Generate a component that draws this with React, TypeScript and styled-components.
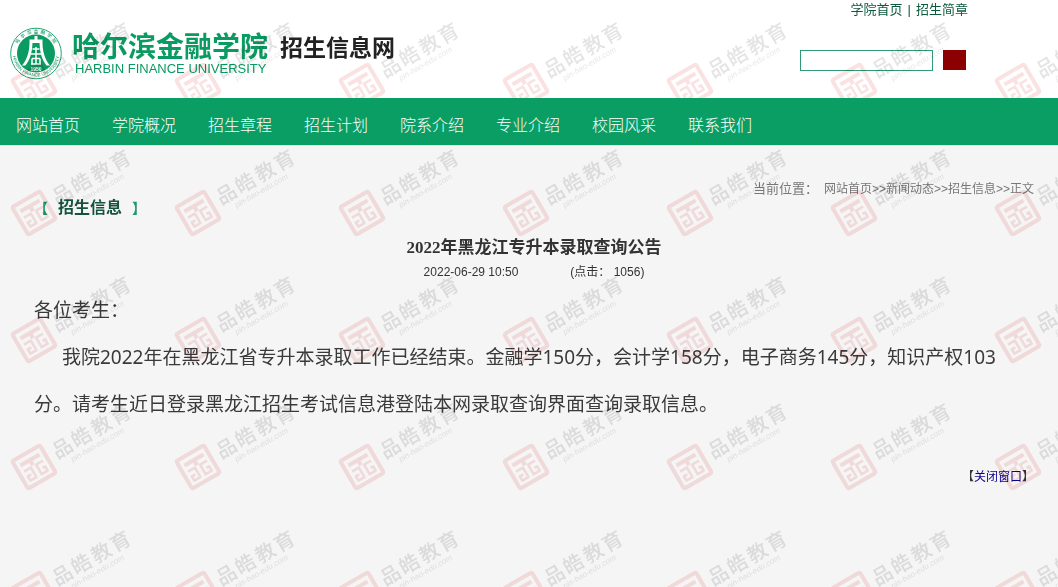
import React from "react";
import styled, { createGlobalStyle } from "styled-components";

const sans = `"Liberation Sans", "Noto Sans CJK SC", sans-serif`;

const GlobalStyle = createGlobalStyle`
  * { box-sizing: border-box; }
  body { margin: 0; background: #f5f5f5; color: #333; font: 12px/16px ${sans}; }
  a { color: inherit; text-decoration: none; }
`;

const Page = styled.div`
  position: relative;
  min-height: 100vh;
  overflow: hidden;
`;

const Header = styled.header`
  display: flex;
  justify-content: space-between;
  height: 98px;
  padding: 0 90px 0 10px;
  background: #fff;
`;

const Brand = styled.a`
  display: flex;
  align-items: flex-start;
  padding-top: 27px;
`;

const School = styled.span`
  display: flex;
  flex-direction: column;
  margin-left: 10px;
  padding-top: 6px;
  color: #0a9b62;
`;

const SchoolName = styled.span`
  font-size: 28px;
  line-height: 30px;
  font-weight: 700;
`;

const SchoolEnglish = styled.span`
  padding-left: 3px;
  font-size: 13px;
  line-height: 12px;
`;

const SiteName = styled.span`
  margin-left: 12px;
  color: #222;
  font-size: 23px;
  line-height: 42px;
  font-weight: 700;
`;

const Tools = styled.div`
  display: flex;
  flex-direction: column;
  gap: 32px;
  width: 168px;
  padding-top: 2px;
`;

const TopLinks = styled.div`
  display: flex;
  justify-content: flex-end;
  gap: 5px;
  color: #0b5a3c;
  font-size: 13px;
  line-height: 16px;
`;

const Search = styled.form`
  display: flex;
  gap: 10px;
`;

const SearchInput = styled.input`
  width: 133px;
  height: 21px;
  padding: 0 4px;
  border: 1px solid #2f9a73;
  background: #fff;
  font: inherit;
`;

const SearchButton = styled.button`
  width: 23px;
  height: 20px;
  padding: 0;
  border: 0;
  background: #8b0000;
  position: relative;
  z-index: 2;
`;

const Nav = styled.nav`
  position: relative;
  z-index: 2;
  display: flex;
  height: 48px;
  background: #0a9e64;
  border-bottom: 1px solid #c4fbe6;
`;

const NavLink = styled.a`
  padding: 0 16px;
  color: #fff;
  font-size: 16px;
  line-height: 56px;
  font-weight: 300;
`;

const Main = styled.main`
  padding: 33px 24px 24px 34px;
`;

const Crumbs = styled.nav`
  display: flex;
  justify-content: flex-end;
  gap: 6px;
  color: #777;
  line-height: 20px;
`;

const CrumbLabel = styled.span`
  font-size: 13px;
`;

const Section = styled.h2`
  display: flex;
  gap: 10px;
  margin: 0;
  color: #14543f;
  font-size: 16px;
  line-height: 18px;
`;

const Bracket = styled.span<{ $side: "left" | "right" }>`
  width: 14px;
  color: #1f9a69;
  font-size: 14px;
  text-align: ${(p) => p.$side};
`;

const Title = styled.h1`
  margin: 19px 0 0;
  font-family: "Liberation Serif", "Noto Sans CJK SC", serif;
  font-size: 17px;
  line-height: 24px;
  text-align: center;
`;

const Meta = styled.p`
  display: flex;
  justify-content: center;
  gap: 52px;
  margin: 2px 0 0;
  line-height: 20px;
`;

const Article = styled.article`
  padding: 5px 24px 0 0;
  color: #3a3a3a;
  font-family: "Noto Sans", "Noto Sans CJK SC", sans-serif;
  font-size: 19px;
  line-height: 47px;
`;

const Paragraph = styled.p<{ $indent?: boolean }>`
  margin: 0;
  text-indent: ${(p) => (p.$indent ? "28px" : "0")};
`;

const Close = styled.div`
  display: flex;
  justify-content: flex-end;
  margin-top: 39px;
  line-height: 20px;
`;

const CloseLink = styled.a`
  && { color: #10008c; }
`;

const Watermarks = styled.div`
  position: absolute;
  inset: 16px -164px 0 0;
  z-index: 1;
  display: grid;
  grid-template-columns: repeat(auto-fill, 164px);
  grid-auto-rows: 127px;
  overflow: hidden;
  pointer-events: none;
  mix-blend-mode: multiply;
`;

function Watermark() {
  return (
    <svg width="164" height="127" viewBox="0 0 164 127">
      <g transform="translate(34 70) rotate(-30)">
        <rect x="-16" y="-16" width="32" height="32" rx="2" fill="none" stroke="#fae2e2" strokeWidth="4" />
        <path d="M-11 -8H11M0 -8V-2" fill="none" stroke="#fae2e2" strokeWidth="4" />
        <path
          d="M-11 -1H-3V10H-10V5H-6M11 -1H3V10H10V5H7"
          fill="none"
          stroke="#fae2e2"
          strokeWidth="2.500"
          strokeLinejoin="round"
        />
        <text y="5" fill="#e4e4e4" fontSize="20" fontWeight="500" fontFamily='"Noto Sans CJK SC", sans-serif'>
          <tspan x="24">品</tspan>
          <tspan x="46">皓</tspan>
          <tspan x="69">教</tspan>
          <tspan x="91">育</tspan>
        </text>
        <text x="36" y="15" fill="#e8e8e8" fontSize="8" fontStyle="italic" fontFamily='"Liberation Sans", sans-serif'>
          pin-hao-edu.com
        </text>
      </g>
    </svg>
  );
}

function Emblem() {
  return (
    <svg width="52" height="53" viewBox="0 0 52 53" aria-hidden="true">
      <defs>
        <path id="ringTop" d="M5.500 26.500a20.500 20.500 0 0 1 41 0" />
        <path id="ringBottom" d="M2.500 26a23.500 23.500 0 0 0 47 0" />
      </defs>
      <circle cx="26" cy="26.500" r="25.300" fill="#fff" stroke="#0a9b62" strokeWidth="0.900" />
      <circle cx="26" cy="26.500" r="19" fill="#0a9b62" />
      <path
        d="M24.500 9H27.500V12.500H32.500V15.500C32.500 25 35 32.500 40 38.500H36.500C32 33 30 26 29.500 16H22.500C22 26 20 33 15.500 38.500H12C17 32.500 19.500 25 19.500 15.500V12.500H24.500Z"
        fill="#fff"
      />
      <path
        d="M26 20V37M22.500 22H29.500M21 27H31M22 31.500H30M22 31.500V36.500M30 31.500V36.500M21 37H31"
        fill="none"
        stroke="#fff"
        strokeWidth="1.500"
      />
      <text x="26" y="43.500" fill="#fff" fontSize="5" fontWeight="700" textAnchor="middle" fontFamily='"Liberation Sans", sans-serif'>1950</text>
      <text fill="#0a9b62" fontSize="4.500" fontWeight="500" fontFamily='"Noto Sans CJK SC", sans-serif'>
        <textPath href="#ringTop" startOffset="50%" textAnchor="middle">哈&#160;&#160;尔&#160;&#160;滨&#160;&#160;金&#160;&#160;融&#160;&#160;学&#160;&#160;院</textPath>
      </text>
      <text fill="#0a9b62" fontSize="4.500" fontFamily='"Liberation Sans", sans-serif'>
        <textPath href="#ringBottom" startOffset="50%" textAnchor="middle">HARBIN FINANCE UNIVERSITY</textPath>
      </text>
    </svg>
  );
}

const navItems = ["网站首页", "学院概况", "招生章程", "招生计划", "院系介绍", "专业介绍", "校园风采", "联系我们"];

export default function App() {
  return (
    <Page>
      <GlobalStyle />
      <Header>
        <Brand href="#">
          <Emblem />
          <School>
            <SchoolName>哈尔滨金融学院</SchoolName>
            <SchoolEnglish>HARBIN FINANCE UNIVERSITY</SchoolEnglish>
          </School>
          <SiteName>招生信息网</SiteName>
        </Brand>
        <Tools>
          <TopLinks>
            <a href="#">学院首页</a>
            <span>|</span>
            <a href="#">招生简章</a>
          </TopLinks>
          <Search onSubmit={(e) => e.preventDefault()}>
            <SearchInput type="text" aria-label="搜索" />
            <SearchButton type="submit" aria-label="搜索" />
          </Search>
        </Tools>
      </Header>
      <Nav>
        {navItems.map((item) => (
          <NavLink href="#" key={item}>{item}</NavLink>
        ))}
      </Nav>
      <Main>
        <Crumbs>
          <CrumbLabel>当前位置：</CrumbLabel>
          <span>
            <a href="#">网站首页</a>&gt;&gt;<a href="#">新闻动态</a>&gt;&gt;<a href="#">招生信息</a>&gt;&gt;正文
          </span>
        </Crumbs>
        <Section>
          <Bracket $side="right">【</Bracket>
          招生信息
          <Bracket $side="left">】</Bracket>
        </Section>
        <Title>2022年黑龙江专升本录取查询公告</Title>
        <Meta>
          <time dateTime="2022-06-29T10:50">2022-06-29 10:50</time>
          <span>(点击： 1056)</span>
        </Meta>
        <Article>
          <Paragraph>各位考生：</Paragraph>
          <Paragraph $indent>
            我院2022年在黑龙江省专升本录取工作已经结束。金融学150分，会计学158分，电子商务145分，知识产权103分。请考生近日登录黑龙江招生考试信息港登陆本网录取查询界面查询录取信息。
          </Paragraph>
        </Article>
        <Close>
          【<CloseLink href="#">关闭窗口</CloseLink>】
        </Close>
      </Main>
      <Watermarks aria-hidden="true">
        {Array.from({ length: 35 }, (_, i) => (
          <Watermark key={i} />
        ))}
      </Watermarks>
    </Page>
  );
}
